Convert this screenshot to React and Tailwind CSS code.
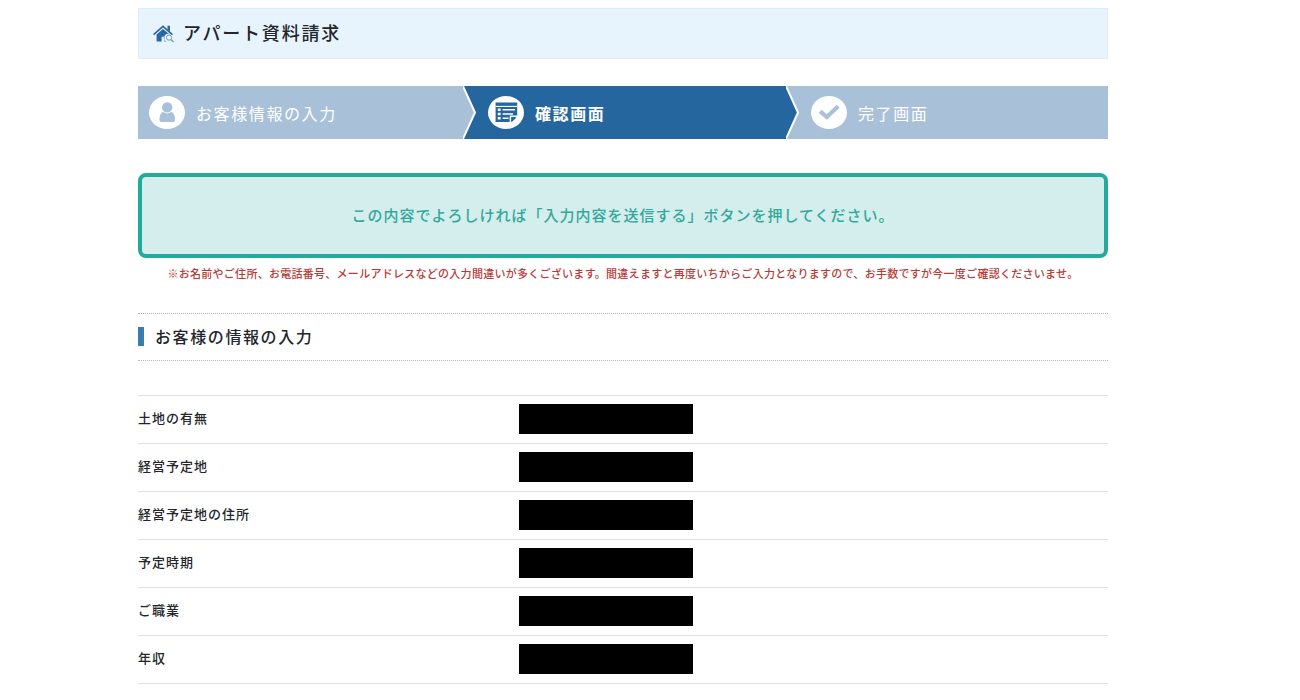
import React from "react";

const steps = [
  { label: "お客様情報の入力", icon: PersonIcon, active: false },
  { label: "確認画面", icon: FormIcon, active: true },
  { label: "完了画面", icon: CheckIcon, active: false },
];

const rows = ["土地の有無", "経営予定地", "経営予定地の住所", "予定時期", "ご職業", "年収"];

function HouseIcon() {
  return (
    <svg viewBox="0 -3 22 21" className="h-[21px] w-[22px] shrink-0" fill="none" aria-hidden="true">
      <path d="M0.6 9.6 L10 1.4 L19.4 9.6" stroke="#2a66a0" strokeWidth="1.7" />
      <path d="M14.5 0.8 H17 V6.4 L14.5 4.4 Z" fill="#2a66a0" />
      <path d="M10 4 L16.6 9.4 A3.6 3.6 0 0 0 13.2 16.4 H11.4 V11.8 H8.6 V16.4 H3.6 V9.4 Z" fill="#2a66a0" />
      <circle cx="16" cy="12.6" r="2.6" fill="#f4f9fe" stroke="#6d9cc4" strokeWidth="1" />
      <path d="M17.9 14.5 L20.6 17" stroke="#6d9cc4" strokeWidth="1.4" />
    </svg>
  );
}

function PersonIcon() {
  return (
    <svg viewBox="0 0 36 33" className="h-[33px] w-[36px] shrink-0" aria-hidden="true">
      <ellipse cx="18" cy="16.5" rx="18" ry="16.5" fill="#fff" />
      <ellipse cx="18.2" cy="11.4" rx="5.2" ry="5.2" fill="#a8c1d9" />
      <path d="M14 15.8 Q18.2 19 22.4 15.8 Q26 17.8 26 24 Q26 26 24.4 26 H12 Q10.4 26 10.4 24 Q10.4 17.8 14 15.8 Z" fill="#a8c1d9" />
    </svg>
  );
}

function FormIcon() {
  return (
    <svg viewBox="0 0 36 33" className="h-[33px] w-[36px] shrink-0" fill="none" aria-hidden="true">
      <ellipse cx="18" cy="16.5" rx="18" ry="16.5" fill="#fff" />
      <path d="M7.6 6.6 H29.2 V20 L23.4 26 H7.6 Z" fill="#25669f" />
      <path d="M7.6 10.4 H29.2" stroke="#fff" strokeWidth="1.1" />
      <path d="M9.8 12.6 h2.8 v2.4 h-2.8 Z M9.8 16.8 h2.8 v2.4 h-2.8 Z M9.8 21 h2.8 v2.4 h-2.8 Z" fill="#fff" />
      <path d="M14.6 13.8 H27 M14.6 18 H25 M14.6 22.2 H20.6" stroke="#fff" strokeWidth="1.5" />
      <path d="M22.4 26.6 V20.2 H29.8" stroke="#fff" strokeWidth="1.4" />
      <path d="M23.8 21.6 H28.4 L23.8 26 Z" fill="#25669f" />
    </svg>
  );
}

function CheckIcon() {
  return (
    <svg viewBox="0 0 36 33" className="h-[33px] w-[36px] shrink-0" fill="none" aria-hidden="true">
      <ellipse cx="18" cy="16.5" rx="18" ry="16.5" fill="#fff" />
      <path d="M9.2 15.4 L15.8 21 L27.2 10.2" stroke="#a8c1d9" strokeWidth="4.2" />
    </svg>
  );
}

// tip of the previous step, laid over the start of the next one
function StepArrow({ color }) {
  return (
    <svg
      viewBox="0 0 14 53"
      preserveAspectRatio="none"
      className="absolute left-0 top-0 h-full w-[14px]"
      fill="none"
      aria-hidden="true"
    >
      <path d="M-3 -2 L-1 -2 L12 26.5 L-1 55 L-3 55 Z" fill={color} stroke="#fff" strokeWidth="2" />
    </svg>
  );
}

const StepBar = () => (
  <ol className="mt-[27px] grid grid-cols-[325fr_323fr_322fr]">
    {steps.map(({ label, icon: Icon, active }, i) => (
      <li
        key={label}
        aria-current={active ? "step" : undefined}
        className={`relative flex h-[53px] items-center gap-[11px] text-base tracking-widest text-white ${
          active ? "bg-[#25669f] font-bold" : "bg-[#a8c1d9]"
        } ${i === 0 ? "pl-[11px]" : "pl-[25px]"}`}
      >
        {i > 0 && <StepArrow color={steps[i - 1].active ? "#25669f" : "#a8c1d9"} />}
        <Icon />
        <span>{label}</span>
      </li>
    ))}
  </ol>
);

const App = () => {
  return (
    <div className="bg-white pr-[54px] font-['Noto_Sans_CJK_JP',sans-serif] text-[#22262b]">
      <main className="mx-auto max-w-[970px] pt-2">
        <header className="flex h-[51px] items-center gap-2 border border-[#e0edf7] bg-[#e8f4fd] pb-[3px] pl-[14px]">
          <HouseIcon />
          <h1 className="text-lg font-medium tracking-widest">アパート資料請求</h1>
        </header>

        <StepBar />

        <div className="mt-[34px] rounded-lg border-4 border-[#22aa9c] bg-[#d3eeec] pt-[25px] pb-[27px] text-center">
          <p className="text-[15px] leading-[25px] font-medium tracking-[1px] text-[#35a79c]">
            この内容でよろしければ「入力内容を送信する」ボタンを押してください。
          </p>
        </div>
        <p className="mt-[5px] text-center text-[11px] leading-5 font-medium tracking-wide text-[#b93a36]">
          ※お名前やご住所、お電話番号、メールアドレスなどの入力間違いが多くございます。間違えますと再度いちからご入力となりますので、お手数ですが今一度ご確認くださいませ。
        </p>

        <section className="mt-[30px]">
          <div className="flex h-12 items-center gap-[11px] border-y border-dotted border-[#b4b8bc] pb-[2px]">
            <span className="h-[19px] w-[6px] bg-[#3c7cb0]" />
            <h2 className="text-base font-medium tracking-widest">お客様の情報の入力</h2>
          </div>

          <table className="mt-[34px] w-full border-t border-[#dddfe0]">
            <tbody>
              {rows.map((name) => (
                <tr key={name} className="h-12 border-b border-[#dddfe0]">
                  <th scope="row" className="w-[39.3%] pb-1 text-left text-[13px] font-medium tracking-[1px]">
                    {name}
                  </th>
                  <td className="pb-[2px]">
                    <span className="block h-[30px] w-[174px] bg-black" />
                  </td>
                </tr>
              ))}
            </tbody>
          </table>
        </section>
      </main>
    </div>
  );
};

export default App;
